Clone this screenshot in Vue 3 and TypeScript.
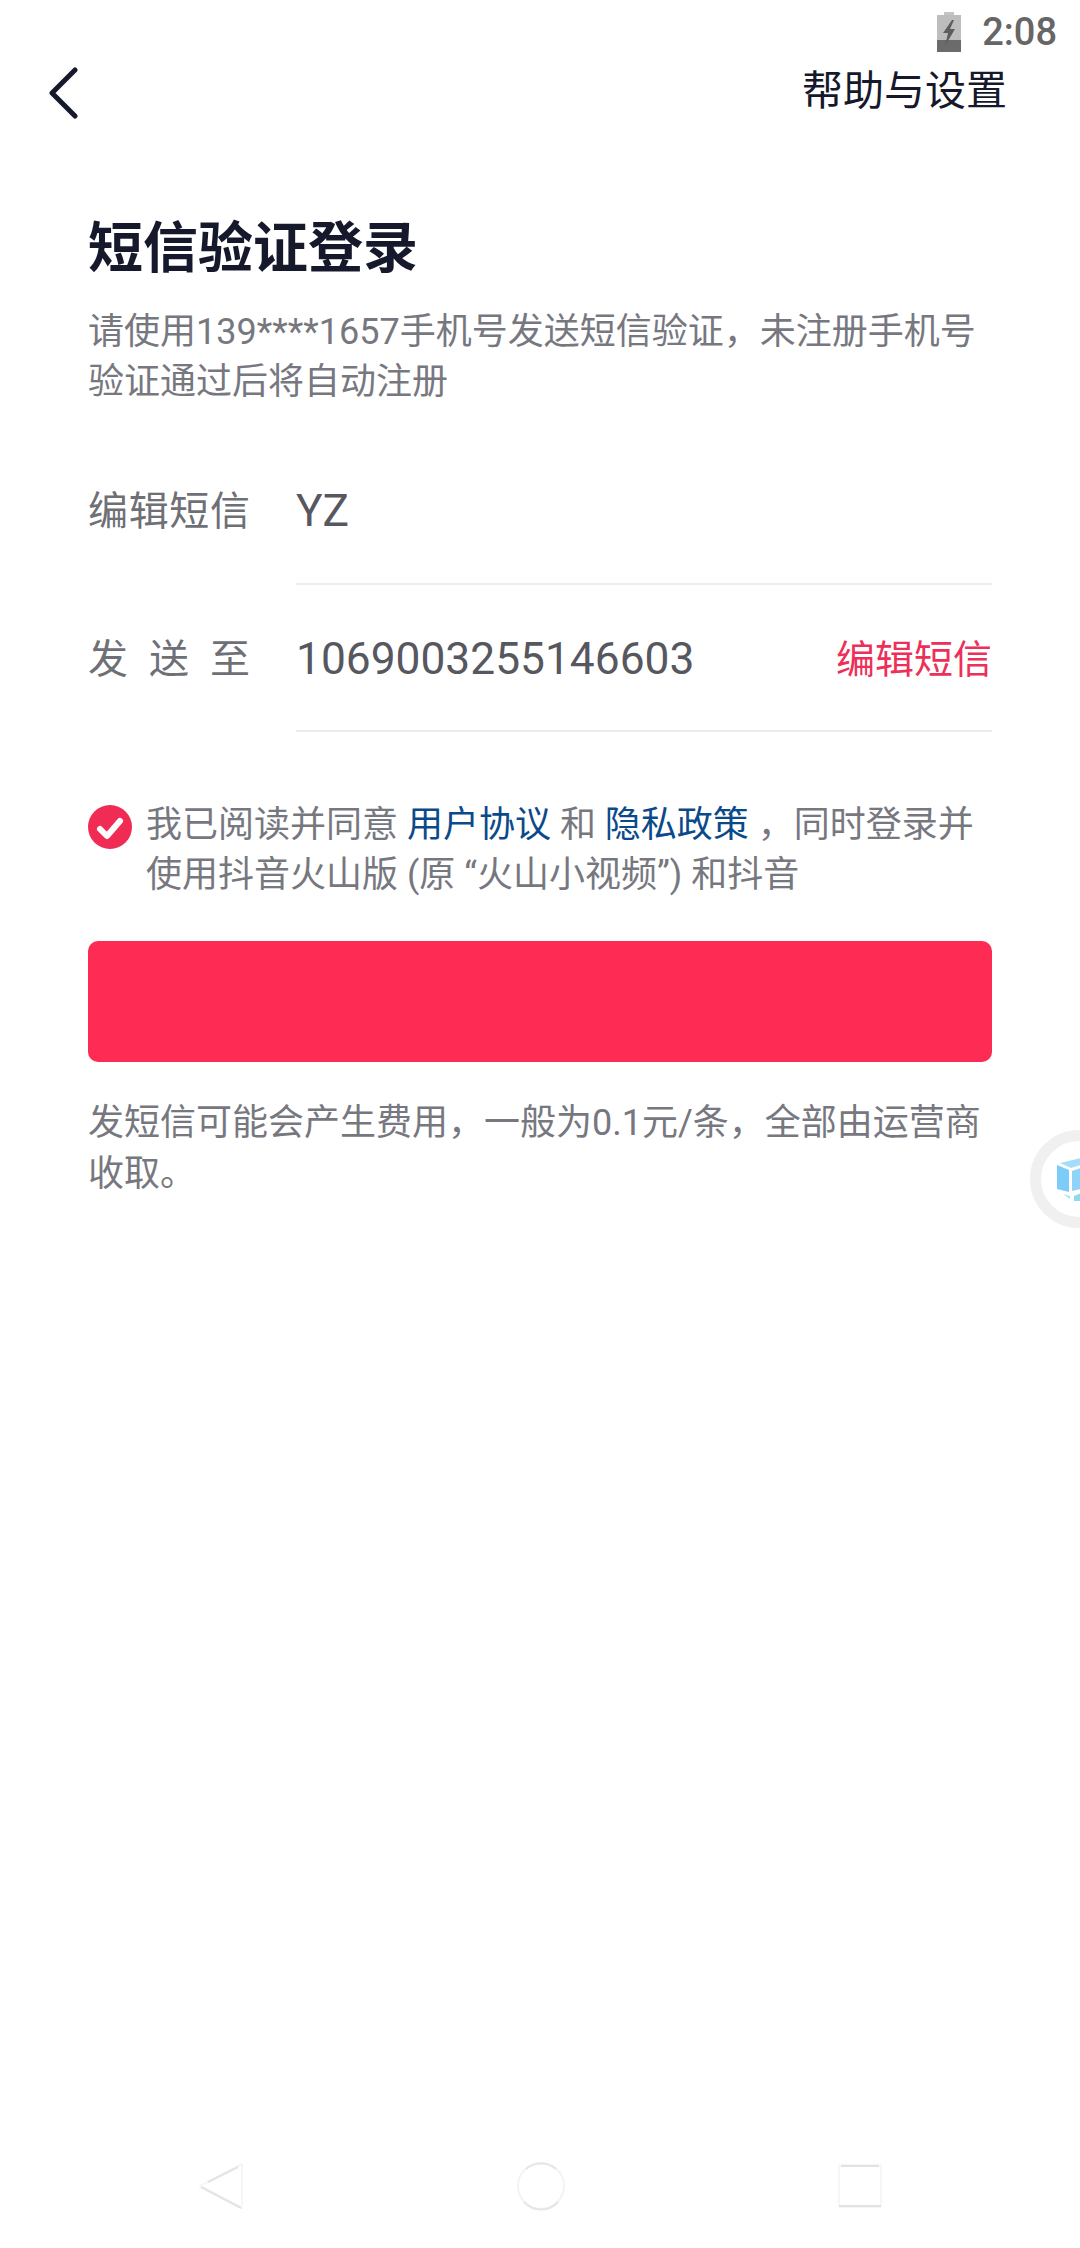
<script setup lang="ts">
const rows = [
  { label: '编辑短信', value: 'YZ', action: '' },
  { label: '发送至', value: '1069003255146603', action: '编辑短信' },
];
</script>

<template>
  <div class="page">
    <div class="status-bar">
      <svg class="battery" width="24" height="40" viewBox="0 0 24 40">
        <rect x="7" y="0" width="10" height="3" fill="#c4c4c4" />
        <rect x="0" y="3" width="24" height="37" fill="#bdbdbd" />
        <rect x="0" y="28" width="24" height="12" fill="#6b6b6b" />
        <path d="M15 8 L6 21 L11 21 L8 34 L18 17 L13 17 L17 8 Z" fill="#5e5e5e" />
      </svg>
      <span class="time">2:08</span>
    </div>

    <header class="top-bar">
      <svg class="back" width="34" height="52" viewBox="0 0 34 52">
        <path d="M29 3 L6 26 L29 49" fill="none" stroke="#16182b" stroke-width="5" stroke-linecap="round" stroke-linejoin="round" />
      </svg>
      <span class="help">帮助与设置</span>
    </header>

    <main class="content">
      <h1 class="title">短信验证登录</h1>
      <p class="subtitle">请使用139****1657手机号发送短信验证，未注册手机号<br />验证通过后将自动注册</p>

      <div class="form">
        <div v-for="row in rows" :key="row.label" class="row">
          <span class="label">{{ row.label }}</span>
          <div class="value-wrap">
            <span class="value">{{ row.value }}</span>
            <span v-if="row.action" class="action">{{ row.action }}</span>
          </div>
        </div>
      </div>

      <div class="agree">
        <svg class="check" width="44" height="44" viewBox="0 0 44 44">
          <circle cx="22" cy="22" r="22" fill="#f02c55" />
          <path d="M12 24 L19 31 L32 16" fill="none" stroke="#fff" stroke-width="6" stroke-linecap="round" stroke-linejoin="round" />
        </svg>
        <p class="agree-text">我已阅读并同意 <a class="link">用户协议</a> 和 <a class="link">隐私政策</a> ，同时登录并<br />使用抖音火山版 (原 “火山小视频”) 和抖音</p>
      </div>

      <button class="send" type="button"></button>

      <p class="note">发短信可能会产生费用，一般为0.1元/条，全部由运营商<br />收取。</p>
    </main>

    <div class="float-ball">
      <svg width="24" height="43" viewBox="0 0 24 43">
        <path d="M0 7 L12 12 L12 34 L0 31 Z" fill="#7ccbf8" />
        <path d="M3 5 L24 0 L24 7 L14 10 Z" fill="#a5dcfa" />
        <path d="M15 13 L24 10 L24 31 L15 33 Z" fill="#8fd3f9" />
        <path d="M6 36 L13 38 L13 41 Z" fill="#a6e4ee" />
        <path d="M17 38 L24 35 L24 43 L17 43 Z" fill="#8fd8f2" />
      </svg>
    </div>

    <nav class="nav-bar">
      <svg width="46" height="50" viewBox="0 0 46 50">
        <path d="M44 3 L2 25 L44 47 Z" fill="none" stroke="#f6f6f6" stroke-width="2" stroke-linejoin="round" />
        <path d="M40 6 L10 21 M3 26 L43 47" fill="none" stroke="#e4e4e4" stroke-width="2" />
      </svg>
      <svg width="50" height="50" viewBox="0 0 50 50">
        <circle cx="25" cy="25" r="23" fill="none" stroke="#f3f3f3" stroke-width="2" />
        <path d="M10 8 A23 23 0 0 1 40 8 M8 41 A23 23 0 0 0 42 41" fill="none" stroke="#e6e6e6" stroke-width="2" />
      </svg>
      <svg width="46" height="46" viewBox="0 0 46 46">
        <rect x="2" y="2" width="42" height="42" rx="2" fill="none" stroke="#f6f6f6" stroke-width="2" />
        <path d="M4 3 H42 M2 43 H44" fill="none" stroke="#e2e2e2" stroke-width="2" />
      </svg>
    </nav>
  </div>
</template>

<style scoped>
.page {
  position: relative;
  display: flex;
  flex-direction: column;
  width: 1080px;
  height: 2248px;
  overflow: hidden;
  background: #fff;
  font-family: Roboto, "Noto Sans CJK SC", sans-serif;
}

.status-bar {
  display: flex;
  justify-content: flex-end;
  align-items: center;
  gap: 21px;
  height: 32px;
  padding: 16px 23px 0 0;
}

.battery {
  display: block;
}

.time {
  font-size: 38px;
  font-weight: 500;
  line-height: 40px;
  color: #666;
}

.top-bar {
  display: flex;
  justify-content: space-between;
  align-items: center;
  height: 84px;
  padding: 0 73px 0 46px;
}

.back {
  margin-top: 6px;
}

.help {
  margin-top: -6px;
  font-size: 41px;
  color: #16182b;
}

.content {
  padding: 0 88px;
}

.title {
  margin: 84px 0 0;
  font-size: 55px;
  line-height: 64px;
  font-weight: 700;
  color: #16182b;
}

.subtitle {
  margin: 27px 0 0;
  font-size: 36px;
  line-height: 50px;
  color: #77787f;
}

.form {
  margin-top: 31px;
}

.row {
  display: flex;
  align-items: stretch;
  gap: 46px;
  height: 147px;
  font-size: 40px;
}

.row + .row {
  height: 144px;
  padding-top: 3px;
}

.label {
  width: 162px;
  flex: none;
  line-height: 147px;
  text-align: justify;
  text-align-last: justify;
  color: #6f7076;
}

.row + .row .label {
  line-height: 144px;
}

.value-wrap {
  flex: 1;
  display: flex;
  justify-content: space-between;
  align-items: center;
  border-bottom: 2px solid #ececed;
}

.value {
  font-size: 44.3px;
  color: #57585f;
}

.action {
  margin-bottom: 7px;
  font-size: 39px;
  color: #ec3059;
}

.agree {
  display: flex;
  gap: 14px;
  margin-top: 68px;
}

.check {
  flex: none;
  margin-top: 5px;
}

.agree-text {
  margin: 0;
  font-size: 36px;
  line-height: 50px;
  white-space: nowrap;
  color: #77787f;
}

.link {
  color: #0b4a8a;
}

.send {
  display: block;
  width: 904px;
  height: 121px;
  margin-top: 41px;
  border: none;
  border-radius: 10px;
  background: #fe2c55;
}

.note {
  margin: 36px 0 0;
  font-size: 36px;
  line-height: 51px;
  white-space: nowrap;
  color: #77787f;
}

.float-ball {
  position: absolute;
  top: 1130px;
  left: 1030px;
  box-sizing: border-box;
  display: flex;
  align-items: center;
  width: 98px;
  height: 98px;
  padding-left: 16px;
  border: 11px solid #f0f0f0;
  border-radius: 50%;
  background: #fff;
}

.nav-bar {
  position: absolute;
  left: 198px;
  top: 2161px;
  display: flex;
  align-items: center;
  justify-content: space-between;
  width: 685px;
}
</style>

<style>
html, body {
  margin: 0;
  background: #fff;
}
</style>
